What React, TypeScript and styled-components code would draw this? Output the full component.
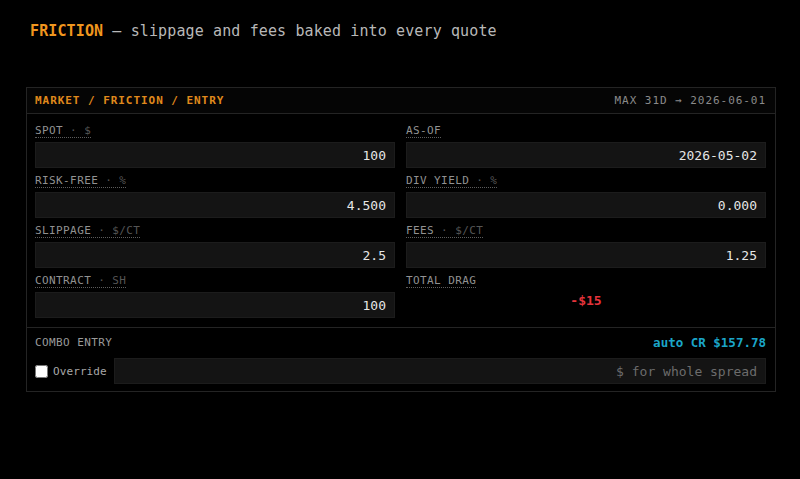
import React, { useState } from 'react'
import styled, { createGlobalStyle } from 'styled-components'

const GlobalStyle = createGlobalStyle`
  html, body {
    margin: 0;
    padding: 0;
    background: #000;
  }
  body {
    font-family: "DejaVu Sans Mono", "Liberation Mono", monospace;
    color: #d8d8d8;
  }
`

const Page = styled.div`
  width: 800px;
  height: 479px;
  box-sizing: border-box;
  padding: 21px 24px 0 26px;
  background: #000;
`

const Title = styled.h1`
  margin: 0 0 46px 4px;
  font-size: 15px;
  line-height: 20px;
  font-weight: 400;
  color: #b8b8b8;
  letter-spacing: 0.12px;
`

const Accent = styled.span`
  color: #f0961e;
  font-weight: 700;
`

const Panel = styled.section`
  width: 750px;
  box-sizing: border-box;
  border: 1px solid #242424;
  background: #000;
`

const PanelHeader = styled.header`
  display: flex;
  justify-content: space-between;
  align-items: center;
  height: 25px;
  padding: 0 9px 0 8px;
  border-bottom: 1px solid #242424;
  background: #050505;
  font-size: 11px;
  letter-spacing: 0.95px;
`

const Crumbs = styled.span`
  color: #e08a1c;
  font-weight: 700;
`

const Meta = styled.span`
  color: #8a8a8a;
`

const Grid = styled.div`
  display: grid;
  grid-template-columns: 1fr 1fr;
  column-gap: 11px;
  row-gap: 6px;
  padding: 10px 9px 9px 8px;
  border-bottom: 1px solid #242424;
`

const Field = styled.div`
  display: flex;
  flex-direction: column;
  align-items: flex-start;
`

const Label = styled.span`
  display: inline-block;
  height: 13px;
  line-height: 13px;
  margin-bottom: 4px;
  font-size: 11px;
  letter-spacing: 0.4px;
  color: #929292;
  border-bottom: 1px dotted #5c5c5c;
`

const Unit = styled.span`
  color: #555;
`

const Input = styled.input<{ $size?: number }>`
  width: 100%;
  height: 26px;
  flex-shrink: 0;
  box-sizing: border-box;
  padding: 0 8px;
  border: 1px solid #1c1c1c;
  background: #141414;
  color: #e6e6e6;
  font-family: "DejaVu Sans Mono", "Liberation Mono", monospace;
  font-size: ${p => p.$size ?? 13}px;
  text-align: right;
  outline: none;
  &::placeholder {
    color: #6c6c6c;
  }
`

const SpreadInput = styled(Input)`
  flex: 1;
  width: auto;
  min-width: 0;
`

const Drag = styled.div`
  align-self: stretch;
  text-align: center;
  line-height: 14px;
  margin-top: 2px;
  font-size: 13px;
  font-weight: 700;
  color: #e5333b;
`

const Combo = styled.div`
  padding: 7px 9px 7px 8px;
`

const ComboTop = styled.div`
  display: flex;
  justify-content: space-between;
  align-items: center;
  height: 14px;
  margin-bottom: 9px;
`

const ComboLabel = styled.span`
  font-size: 11px;
  letter-spacing: 0.4px;
  color: #9a9a9a;
`

const Auto = styled.span`
  font-size: 12.5px;
  font-weight: 700;
  color: #1ba6c9;
`

const ComboRow = styled.div`
  display: flex;
  align-items: center;
  gap: 7px;
`

const Check = styled.label`
  display: flex;
  align-items: center;
  gap: 5px;
  font-size: 11px;
  letter-spacing: 0.1px;
  color: #a8a8a8;
  white-space: nowrap;
  input {
    margin: 0;
    width: 13px;
    height: 13px;
    accent-color: #fff;
  }
`

type F = { label: string; unit?: string; value?: string }

const fields: F[] = [
  { label: 'SPOT', unit: '$', value: '100' },
  { label: 'AS-OF', value: '2026-05-02' },
  { label: 'RISK-FREE', unit: '%', value: '4.500' },
  { label: 'DIV YIELD', unit: '%', value: '0.000' },
  { label: 'SLIPPAGE', unit: '$/CT', value: '2.5' },
  { label: 'FEES', unit: '$/CT', value: '1.25' },
  { label: 'CONTRACT', unit: 'SH', value: '100' },
]

export default function App() {
  const [vals, setVals] = useState(fields.map(f => f.value ?? ''))
  const [override, setOverride] = useState(false)

  return (
    <Page>
      <GlobalStyle />
      <Title>
        <Accent>FRICTION</Accent> — slippage and fees baked into every quote
      </Title>
      <Panel>
        <PanelHeader>
          <Crumbs>MARKET / FRICTION / ENTRY</Crumbs>
          <Meta>MAX 31D → 2026-06-01</Meta>
        </PanelHeader>
        <Grid>
          {fields.map((f, i) => (
            <Field key={f.label}>
              <Label>
                {f.label}
                {f.unit && <Unit> · {f.unit}</Unit>}
              </Label>
              <Input
                value={vals[i]}
                onChange={e => setVals(v => v.map((x, j) => (j === i ? e.target.value : x)))}
              />
            </Field>
          ))}
          <Field>
            <Label>TOTAL DRAG</Label>
            <Drag>-$15</Drag>
          </Field>
        </Grid>
        <Combo>
          <ComboTop>
            <ComboLabel>COMBO ENTRY</ComboLabel>
            <Auto>auto CR $157.78</Auto>
          </ComboTop>
          <ComboRow>
            <Check>
              <input type="checkbox" checked={override} onChange={e => setOverride(e.target.checked)} />
              Override
            </Check>
            <SpreadInput placeholder="$ for whole spread" $size={13} disabled={!override} />
          </ComboRow>
        </Combo>
      </Panel>
    </Page>
  )
}
